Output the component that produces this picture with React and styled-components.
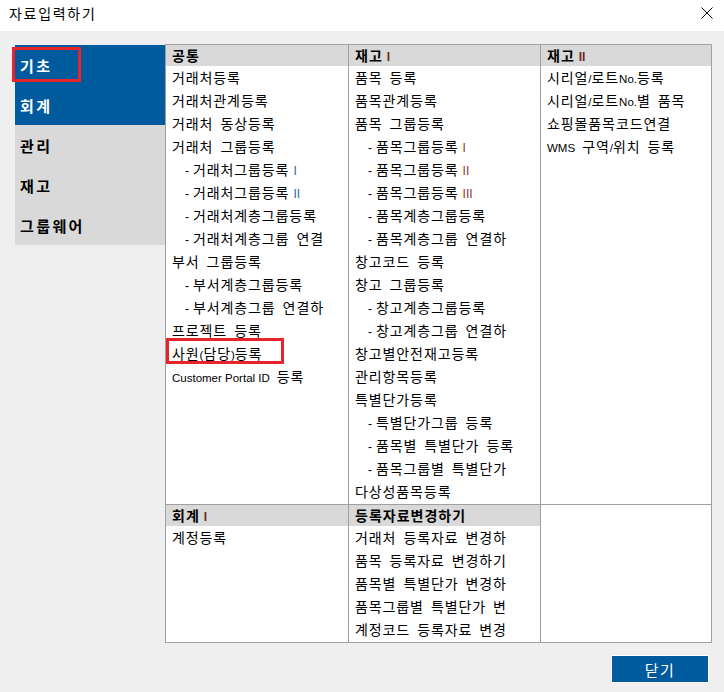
import React from "react";
import styled, { createGlobalStyle } from "styled-components";

const GlobalStyle = createGlobalStyle`
  html, body {
    margin: 0;
    padding: 0;
    background: #efefef;
  }
  body {
    font-family: "Noto Sans CJK KR", "Noto Sans", sans-serif;
    color: #000;
  }
`;

const Window = styled.div`
  width: 724px;
  min-height: 692px;
  background: #efefef;
  display: flex;
  flex-direction: column;
`;

const TitleBar = styled.div`
  height: 31px;
  background: #fff;
  display: flex;
  align-items: center;
  justify-content: space-between;
  padding: 0 11px 5px 9px;
  box-sizing: border-box;
`;

const Title = styled.div`
  font-size: 14px;
  letter-spacing: 1.7px;
  line-height: 1;
`;

const Close = styled.svg`
  width: 12px;
  height: 12px;
  display: block;
`;

const Body = styled.div`
  display: flex;
  align-items: flex-start;
  padding: 13px 0 0 15px;
`;

const Nav = styled.div`
  width: 150px;
  margin-top: 1px;
  display: flex;
  flex-direction: column;
`;

const NavItem = styled.div`
  position: relative;
  height: 40px;
  display: flex;
  align-items: center;
  padding-left: 5px;
  font-size: 15px;
  font-weight: 700;
  letter-spacing: 2.4px;
  background: ${({ $active }) => ($active ? "#005a9e" : "#d9d9d9")};
  color: ${({ $active }) => ($active ? "#fff" : "#000")};
`;

const Mark = styled.span`
  position: absolute;
  left: ${({ $left }) => $left}px;
  top: ${({ $top }) => $top}px;
  width: ${({ $w }) => $w}px;
  height: ${({ $h }) => $h}px;
  border: 3px solid #e8232a;
  box-sizing: border-box;
  pointer-events: none;
`;

const Table = styled.div`
  width: 547px;
  box-sizing: border-box;
  border: 1px solid #a0a0a0;
  background: #fff;
`;

const Section = styled.div`
  display: flex;
  & + & {
    border-top: 1px solid #a0a0a0;
  }
`;

const Column = styled.div`
  width: ${({ $w }) => $w}px;
  flex: none;
  padding-bottom: 1px;
  & + & {
    border-left: 1px solid #a0a0a0;
  }
`;

const Header = styled.div`
  height: 21px;
  line-height: 21px;
  background: #d9d9d9;
  padding-left: 6px;
  font-size: 14px;
  font-weight: 700;
  letter-spacing: 1px;
  white-space: nowrap;
`;

const Item = styled.div`
  position: relative;
  height: 23px;
  line-height: 23px;
  padding-left: ${({ $sub }) => ($sub ? 19 : 6)}px;
  font-size: 14px;
  letter-spacing: 0.9px;
  word-spacing: 3px;
  white-space: nowrap;
`;

const Dash = styled.span`
  font-family: "Liberation Sans", sans-serif;
  font-size: 12px;
  margin-right: 3px;
`;

const Latin = styled.span`
  font-family: "Liberation Sans", sans-serif;
  font-size: 11.5px;
  letter-spacing: 0;
  word-spacing: 0;
`;

const Roman = styled.span`
  font-family: "Liberation Sans", sans-serif;
  font-size: 12px;
  font-weight: ${({ $bold }) => ($bold ? 700 : 400)};
  letter-spacing: 0;
  margin-left: 4px;
  color: ${({ $tone }) => $tone};
`;

const Footer = styled.div`
  display: flex;
  justify-content: flex-end;
  padding: 12px 15px 0 0;
`;

const Button = styled.button`
  width: 98px;
  height: 28px;
  box-sizing: border-box;
  border: 1px solid #fff;
  background: #005a9e;
  color: #fff;
  font-family: "Noto Sans CJK KR", sans-serif;
  font-size: 15px;
  letter-spacing: 1.5px;
  padding: 0;
  cursor: pointer;
`;

const nav = [
  { label: "기초", active: true, mark: true },
  { label: "회계", active: true },
  { label: "관리" },
  { label: "재고" },
  { label: "그룹웨어" },
];

const sections = [
  [
    {
      w: 182,
      title: "공통",
      items: [
        { label: "거래처등록" },
        { label: "거래처관계등록" },
        { label: "거래처 동상등록" },
        { label: "거래처 그룹등록" },
        { label: "거래처그룹등록", sub: true, roman: "I", tone: "#2a6a9a" },
        { label: "거래처그룹등록", sub: true, roman: "II", tone: "#2a6a9a" },
        { label: "거래처계층그룹등록", sub: true },
        { label: "거래처계층그룹 연결", sub: true },
        { label: "부서 그룹등록" },
        { label: "부서계층그룹등록", sub: true },
        { label: "부서계층그룹 연결하", sub: true },
        { label: "프로젝트 등록" },
        { label: <>사원<Latin>(</Latin>담당<Latin>)</Latin>등록</>, mark: true },
        { label: <><Latin>Customer Portal ID</Latin> 등록</> },
      ],
    },
    {
      w: 191,
      title: "재고",
      roman: "I",
      items: [
        { label: "품목 등록" },
        { label: "품목관계등록" },
        { label: "품목 그룹등록" },
        { label: "품목그룹등록", sub: true, roman: "I", tone: "#8a3a2a" },
        { label: "품목그룹등록", sub: true, roman: "II", tone: "#8a3a2a" },
        { label: "품목그룹등록", sub: true, roman: "III", tone: "#8a3a2a" },
        { label: "품목계층그룹등록", sub: true },
        { label: "품목계층그룹 연결하", sub: true },
        { label: "창고코드 등록" },
        { label: "창고 그룹등록" },
        { label: "창고계층그룹등록", sub: true },
        { label: "창고계층그룹 연결하", sub: true },
        { label: "창고별안전재고등록" },
        { label: "관리항목등록" },
        { label: "특별단가등록" },
        { label: "특별단가그룹 등록", sub: true },
        { label: "품목별 특별단가 등록", sub: true },
        { label: "품목그룹별 특별단가", sub: true },
        { label: "다상성품목등록" },
      ],
    },
    {
      w: 170,
      title: "재고",
      roman: "II",
      items: [
        { label: <>시리얼<Latin>/</Latin>로트<Latin>No.</Latin>등록</> },
        { label: <>시리얼<Latin>/</Latin>로트<Latin>No.</Latin>별 품목</> },
        { label: "쇼핑몰품목코드연결" },
        { label: <><Latin>WMS</Latin> 구역<Latin>/</Latin>위치 등록</> },
      ],
    },
  ],
  [
    {
      w: 182,
      title: "회계",
      roman: "I",
      items: [{ label: "계정등록" }],
    },
    {
      w: 191,
      title: "등록자료변경하기",
      items: [
        { label: "거래처 등록자료 변경하" },
        { label: "품목 등록자료 변경하기" },
        { label: "품목별 특별단가 변경하" },
        { label: "품목그룹별 특별단가 변" },
        { label: "계정코드 등록자료 변경" },
      ],
    },
    { w: 170, items: [] },
  ],
];

const App = () => {
  return (
    <Window>
      <GlobalStyle />
      <TitleBar>
        <Title>자료입력하기</Title>
        <Close viewBox="0 0 12 12">
          <path d="M0.5 0.5 L11.5 11.5 M11.5 0.5 L0.5 11.5" stroke="#000" strokeWidth="1" fill="none" />
        </Close>
      </TitleBar>

      <Body>
        <Nav>
          {nav.map((n) => (
            <NavItem key={n.label} $active={n.active}>
              {n.label}
              {n.mark && <Mark $left={-3} $top={2} $w={69} $h={35} />}
            </NavItem>
          ))}
        </Nav>

        <Table>
          {sections.map((cols, si) => (
            <Section key={si}>
              {cols.map((col, ci) => (
                <Column key={ci} $w={col.w}>
                  {col.title && (
                    <Header>
                      {col.title}
                      {col.roman && <Roman $bold $tone="#6a2a1a">{col.roman}</Roman>}
                    </Header>
                  )}
                  {col.items.map((it, ii) => (
                    <Item key={ii} $sub={it.sub}>
                      {it.sub && <Dash>-</Dash>}
                      {it.label}
                      {it.roman && <Roman $tone={it.tone}>{it.roman}</Roman>}
                      {it.mark && <Mark $left={0} $top={-4} $w={118} $h={26} />}
                    </Item>
                  ))}
                </Column>
              ))}
            </Section>
          ))}
        </Table>
      </Body>

      <Footer>
        <Button>닫기</Button>
      </Footer>
    </Window>
  );
};

export default App;
